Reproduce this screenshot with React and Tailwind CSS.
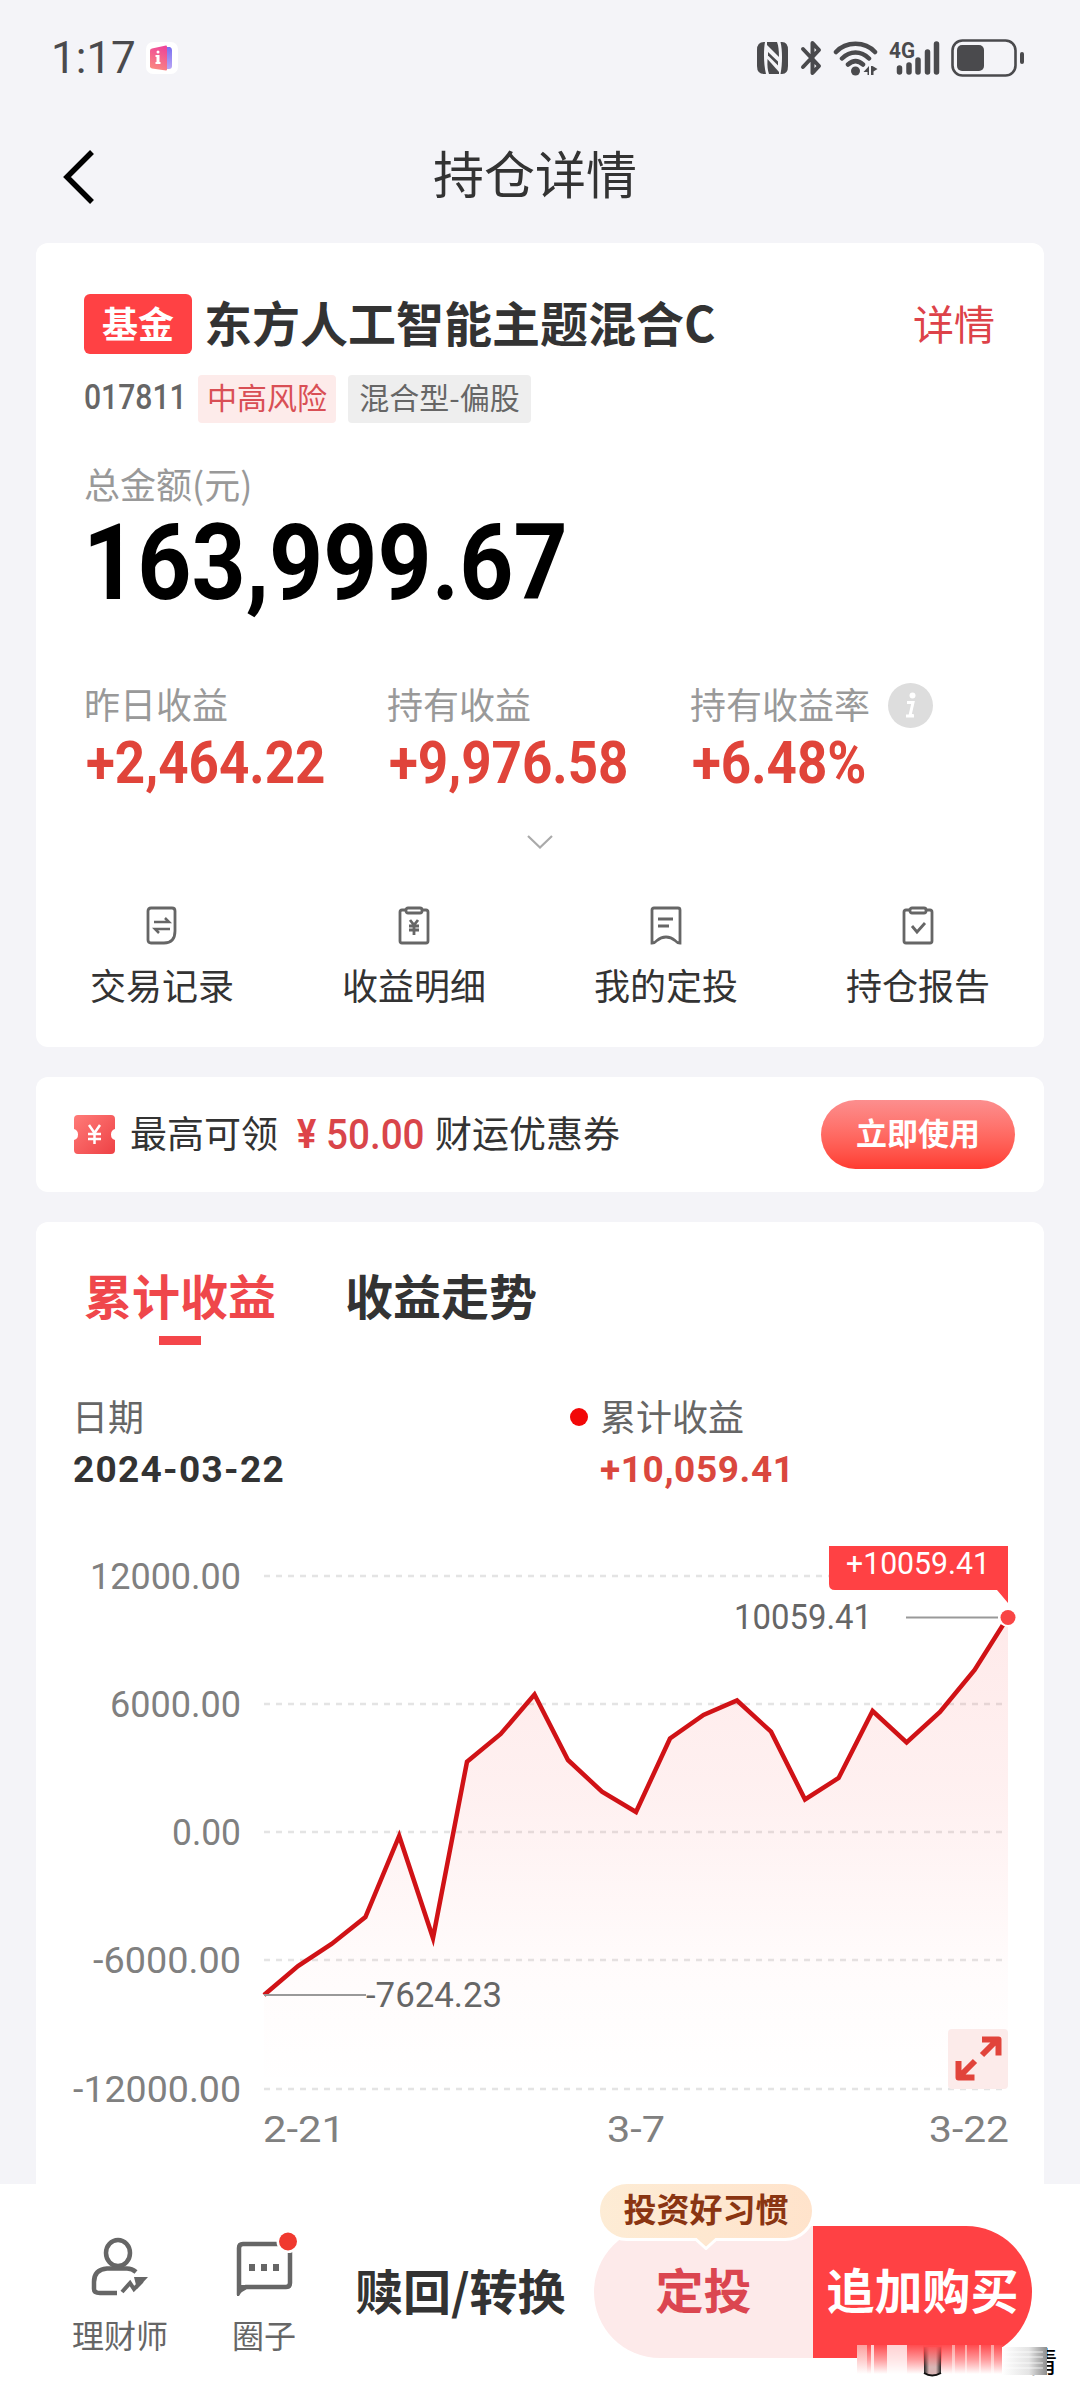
import React from 'react';

const stats = [
  { label: '昨日收益', value: '+2,464.22' },
  { label: '持有收益', value: '+9,976.58' },
  { label: '持有收益率', value: '+6.48%', info: true },
];

const points = [
  [264, 1995], [298, 1966], [331.6, 1944], [365.4, 1917], [399.2, 1836], [433, 1938],
  [467, 1761.7], [500.7, 1734], [534.5, 1694.5], [568, 1760], [602, 1791.7], [636, 1812],
  [670, 1738.5], [703.5, 1715], [737, 1700.5], [771, 1731.7], [805, 1799.5], [838.6, 1778],
  [872.6, 1711], [906.6, 1742.5], [940, 1712], [974.6, 1670], [1008, 1617],
];

const gridLines = [
  { y: 1576, label: '12000.00', x: 91, w: 149 },
  { y: 1704, label: '6000.00', x: 111, w: 129 },
  { y: 1832, label: '0.00', x: 173, w: 67 },
  { y: 1960, label: '-6000.00', x: 94, w: 146 },
  { y: 2089, label: '-12000.00', x: 74, w: 166 },
];

function StatusBar() {
  return (
    <div className="h-[116px] flex items-center pl-[51px] pr-[55px] text-[#4a4a4d]">
      <span className="font-[Roboto] text-[44px] leading-[44px]">1:17</span>
      <svg className="ml-[10px]" width="32" height="32" viewBox="0 0 32 32">
        <defs>
          <linearGradient id="badge" x1="0.6" y1="0" x2="0.3" y2="1">
            <stop offset="0" stopColor="#ee4699" />
            <stop offset="1" stopColor="#fb8a80" />
          </linearGradient>
          <linearGradient id="badgeBack" x1="0" y1="0" x2="0" y2="1">
            <stop offset="0" stopColor="#7a70f0" />
            <stop offset="1" stopColor="#b9a5f5" />
          </linearGradient>
        </defs>
        <rect width="32" height="32" rx="7" fill="#fff" />
        <path d="M18 5h6q2 1 2 3v16q0 3-3 3h-5z" fill="url(#badgeBack)" />
        <path d="M6 6.500l14-3q1 0 1 1v23q0 1-1 1l-14-2q-2-.5-2-2v-16q0-1.500 2-2z" fill="url(#badge)" />
        <path d="M10.500 13h3v7h1v2h-5v-2h1v-5h-1v-2z" fill="#fff" />
        <circle cx="12" cy="10" r="1.500" fill="#fff" />
      </svg>

      <div className="ml-auto flex items-center">
        <svg width="32" height="34" viewBox="0 0 32 34" fill="currentColor">
          <path d="M7 1h1c-1.500 8-1.500 22 1 32H7q-7 0-7-8V9q0-8 7-8z" />
          <path d="M10 1h10q2 5 2 15L10 4z" />
          <path d="M23.500 1h1.500q6 0 6 8v16q0 8-6 8h-1.500c2-10 2-24 0-32z" />
          <path d="M12 33q-2-5-1.500-15l11.500 13v2z" />
          <path d="M11 11l10 9.500v4L11 14.500z" />
        </svg>
        <svg className="ml-[11px]" width="23" height="36" viewBox="0 0 23 36" fill="none" stroke="currentColor" strokeWidth="4" strokeLinejoin="round" strokeLinecap="round">
          <path d="M3 9l16 17-6.500 7V3L19 10 3 27" />
        </svg>
        <svg className="ml-[10px]" width="46" height="36" viewBox="0 0 46 36" fill="none" stroke="currentColor" strokeWidth="4.500" strokeLinecap="round">
          <path d="M3 12C13 1 32 1 42 12M9 18.500c8-8 19-8 27 0M15 24.500c5-4.500 10-4.500 15 0" />
          <circle cx="22.500" cy="31" r="4.500" fill="currentColor" stroke="none" />
          <path d="M36 26v9h-1.500v-3h-4zM38 35v-9h1.500l5 3-4 2.500v3.500z" fill="currentColor" stroke="none" />
        </svg>
        <svg className="ml-[10px] overflow-visible" width="52" height="38" viewBox="0 0 52 38">
          <text x="0" y="19" fontFamily="Roboto" fontSize="22" fontWeight="700" textLength="26" lengthAdjust="spacingAndGlyphs" fill="currentColor">4G</text>
          <path d="M10.500 29v4M20 26v7M29 21v12M38.500 13v20M47.500 5v28" stroke="currentColor" strokeWidth="5.500" strokeLinecap="round" />
        </svg>
        <svg className="ml-[10px]" width="74" height="38" viewBox="0 0 74 38">
          <rect x="1.500" y="1.500" width="63" height="35" rx="10" fill="none" stroke="currentColor" strokeWidth="2.600" />
          <rect x="6" y="6" width="27" height="26" rx="5" fill="currentColor" />
          <rect x="69" y="13" width="4" height="12" rx="2" fill="currentColor" />
        </svg>
      </div>
    </div>
  );
}

function Header() {
  return (
    <div className="h-[127px] pb-[5px] flex items-center">
      <svg className="ml-[62px]" width="34" height="56" viewBox="0 0 34 56" fill="none" stroke="#000" strokeWidth="5.500">
        <path d="M30 3L5 28l25 25" />
      </svg>
      <h1 className="grow text-center text-[51px] leading-[60px] text-[#333] pr-[106px] pb-[10px]">持仓详情</h1>
    </div>
  );
}

const quickLinks = [
  {
    label: '交易记录',
    icon: (
      <>
        <path d="M6 3h21q3 0 3 3v20q0 12-11 12H6q-3 0-3-3V6q0-3 3-3z" />
        <path d="M9 17h15l-4-4M25 24H10l4 4" strokeWidth="2.500" />
      </>
    ),
  },
  {
    label: '收益明细',
    icon: (
      <>
        <path d="M8 5H5q-2 0-2 2v29q0 2 2 2h24q2 0 2-2V7q0-2-2-2h-3" />
        <rect x="9" y="3" width="16" height="5" rx="2" />
        <path d="M13 15l4 5 4-5M12 21h10M12 25h10M17 20v10" />
      </>
    ),
  },
  {
    label: '我的定投',
    icon: (
      <>
        <path d="M5 3h24q2 0 2 2v33q-3 0-5-2.500-4-3.500-9-3.500t-9 3.500Q6 38 3 38V5q0-2 2-2z" />
        <path d="M9 14h15M9 21h11" />
      </>
    ),
  },
  {
    label: '持仓报告',
    icon: (
      <>
        <path d="M8 5H5q-2 0-2 2v29q0 2 2 2h24q2 0 2-2V7q0-2-2-2h-3" />
        <rect x="9" y="3" width="16" height="5" rx="2" />
        <path d="M11 21l5 6 8-9" />
      </>
    ),
  },
];

function HoldingCard() {
  return (
    <div className="mx-9 h-[804px] shrink-0 rounded-xl bg-white pt-[51px]">
      <div className="flex items-center h-[60px] pl-12 pr-[49px]">
        <span className="w-[108px] h-[60px] rounded-md bg-[#ff4144] text-white text-[36px] leading-[56px] font-bold text-center">基金</span>
        <h2 className="ml-3 pb-[5px] text-[48px] leading-[55px] font-bold text-[#333]">东方人工智能主题混合C</h2>
        <a className="ml-auto pb-[5px] text-[41px] leading-[50px] text-[#dd4249]">详情</a>
      </div>

      <div className="flex items-center h-12 mt-[21px] pl-12">
        <div className="w-[114px]">
          <div className="font-[Roboto] text-[35px] leading-[46px] pb-[2px] font-medium text-[#666] origin-left scale-x-[0.86]">017811</div>
        </div>
        <span className="w-[138px] h-12 rounded-sm bg-[#fdebea] text-[#d94f55] text-[30px] leading-[42px] text-center">中高风险</span>
        <span className="ml-3 w-[183px] h-12 rounded-sm bg-[#eee] text-[#666] text-[30px] leading-[42px] text-center">混合型-偏股</span>
      </div>

      <div className="mt-[40px] pl-12 text-[36px] leading-[40px] text-[#999]">总金额(元)</div>
      <div className="mt-[5px] pl-[47px] font-[Roboto] font-bold text-[106px] leading-[110px] text-black">
        <div className="origin-left scale-x-[0.892]">163,999.67</div>
      </div>

      <div className="mt-[65px] pl-12 flex">
        {stats.map((s) => (
          <div key={s.label} className="w-[303px]">
            <div className="flex items-center text-[36px] leading-[40px] h-10 text-[#999] whitespace-nowrap">
              {s.label}
              {s.info && (
                <svg className="ml-[18px] mt-1 shrink-0" width="45" height="45" viewBox="0 0 45 45">
                  <circle cx="22.500" cy="22.500" r="22.500" fill="#ddd" />
                  <circle cx="24.500" cy="12.500" r="3" fill="#fff" />
                  <path d="M19 19.500h6l-3 13h3.500M18 33h8" stroke="#fff" strokeWidth="3" fill="none" />
                </svg>
              )}
            </div>
            <div className="mt-[10px] ml-[2px] font-[Roboto] font-bold text-[59px] leading-[60px] text-[#e0443a] origin-left scale-x-[0.897]">{s.value}</div>
          </div>
        ))}
      </div>

      <svg className="mt-[42px] mx-auto" width="26" height="14" viewBox="0 0 26 14" fill="none" stroke="#aaa" strokeWidth="2.200">
        <path d="M1 1l12 11.500L25 1" />
      </svg>

      <div className="mt-[56px] grid grid-cols-4">
        {quickLinks.map((q) => (
          <div key={q.label} className="flex flex-col items-center">
            <svg width="34" height="41" viewBox="0 0 34 41" fill="none" stroke="#666" strokeWidth="2.800">
              {q.icon}
            </svg>
            <span className="mt-[18px] text-[36px] leading-[40px] text-[#333]">{q.label}</span>
          </div>
        ))}
      </div>
    </div>
  );
}

function CouponBar() {
  return (
    <div className="mx-9 mt-[30px] h-[115px] shrink-0 rounded-xl bg-white flex items-center pl-[38px] pr-[29px] text-[37px] leading-[44px] text-[#333]">
      <svg width="41" height="39" viewBox="0 0 41 39">
        <defs>
          <linearGradient id="coupon" x1="0" y1="0" x2="1" y2="1">
            <stop offset="0" stopColor="#ff7b78" />
            <stop offset="1" stopColor="#ee4145" />
          </linearGradient>
        </defs>
        <path d="M4 0h33q4 0 4 4v10q-4 1-4 5.500t4 5.500v10q0 4-4 4H4q-4 0-4-4V25q4-1 4-5.500T0 14V4q0-4 4-4z" fill="url(#coupon)" />
        <path d="M15 10l5.500 8 5.500-8M14 19h13M14 24h13M20.500 18v11" stroke="#fff" strokeWidth="2.500" fill="none" />
      </svg>
      <span className="ml-[15px] pb-[6px]">最高可领</span>
      <span className="w-[20px] ml-[19px] font-[Roboto] font-bold text-[40px] text-[#dd4449] scale-x-[0.9] origin-left">¥</span>
      <span className="w-[109px] ml-[9px] font-[Roboto] font-medium text-[42px] text-[#d9454a] scale-x-[0.92] origin-left">50.00</span>
      <span className="pb-[6px]">财运优惠券</span>
      <button className="ml-auto w-[194px] h-[69px] rounded-full bg-linear-to-b from-[#fc8e8e] to-[#ff3a30] text-white text-[31px] font-bold leading-[64px] pb-[5px]">
        立即使用
      </button>
    </div>
  );
}

function Chart() {
  const line = points.map((p) => p.join(',')).join(' ');
  return (
    <svg className="mt-[30px]" width="1008" height="640" viewBox="36 1520 1008 640" fontFamily="Roboto">
      <defs>
        <linearGradient id="area" gradientUnits="userSpaceOnUse" x1="0" y1="1617" x2="0" y2="2089">
          <stop offset="0" stopColor="#fa5050" stopOpacity="0.12" />
          <stop offset="0.400" stopColor="#fa5050" stopOpacity="0.080" />
          <stop offset="0.750" stopColor="#fa5050" stopOpacity="0.020" />
          <stop offset="1" stopColor="#fa5050" stopOpacity="0" />
        </linearGradient>
      </defs>

      {gridLines.map((g) => (
        <g key={g.y}>
          <line x1="264" y1={g.y} x2="1008" y2={g.y} stroke="#e4e4e4" strokeWidth="2.500" strokeDasharray="6 6" />
          <text x={g.x - 1} y={g.y + 12.5} fontSize="36" fill="#808080" textLength={g.w + 2} lengthAdjust="spacingAndGlyphs">{g.label}</text>
        </g>
      ))}

      <polygon points={`${line} 1008,2089 264,2089`} fill="url(#area)" />
      <polyline points={line} fill="none" stroke="#d01216" strokeWidth="4.500" />

      <g fontSize="35" fill="#666">
        <line x1="264" y1="1995" x2="366" y2="1995" stroke="#999" strokeWidth="2" />
        <text x="366" y="2006.500" textLength="136" lengthAdjust="spacingAndGlyphs">-7624.23</text>
        <line x1="906" y1="1617.500" x2="998" y2="1617.500" stroke="#999" strokeWidth="2" />
        <text x="734" y="1629" textLength="138" lengthAdjust="spacingAndGlyphs">10059.41</text>
      </g>

      <path d="M829 1546h179v57l-11-13H835q-6 0-6-6z" fill="#ff4144" />
      <text x="846" y="1574" fontSize="31" fill="#fff" textLength="144" lengthAdjust="spacingAndGlyphs">+10059.41</text>
      <circle cx="1008" cy="1617.500" r="9.500" fill="#fff" />
      <circle cx="1008" cy="1617.500" r="7.500" fill="#f94545" />

      <rect x="948" y="2029" width="60" height="60" rx="4" fill="#fcebea" />
      <g fill="none" stroke="#e1443b" strokeWidth="6">
        <path d="M982 2055l16-16M982 2039.500h16.500v16" strokeLinejoin="round" />
        <path d="M975 2061l-16 16M958.500 2061v16.500h16" strokeLinejoin="round" />
      </g>

      <g fontSize="36" fill="#808080">
        <text x="263" y="2142" textLength="82" lengthAdjust="spacingAndGlyphs">2-21</text>
        <text x="607" y="2142" textLength="58" lengthAdjust="spacingAndGlyphs">3-7</text>
        <text x="929" y="2142" textLength="80" lengthAdjust="spacingAndGlyphs">3-22</text>
      </g>
    </svg>
  );
}

function ProfitCard() {
  return (
    <div className="mx-9 mt-[30px] h-[962px] shrink-0 rounded-t-xl bg-white pt-[44px]">
      <div className="flex gap-[69px] pl-12 text-[48px] leading-[56px] font-bold">
        <span className="text-[#ef474b]">累计收益</span>
        <span className="text-[#333]">收益走势</span>
      </div>
      <div className="mt-[14px] ml-[123px] w-[42px] h-[9px] bg-[#f4464a]" />

      <div className="mt-[50px] flex pl-9 text-[36px] leading-[40px]">
        <div className="w-[498px]">
          <div className="text-[#666]">日期</div>
          <div className="mt-[15px] ml-px font-[Roboto] font-bold text-[37px] tracking-[1.3px] text-[#333]">2024-03-22</div>
        </div>
        <div>
          <div className="flex items-center text-[#666]">
            <i className="w-[18px] h-[18px] rounded-full bg-[#f20808] mr-[12px] mt-1" />
            累计收益
          </div>
          <div className="mt-[15px] ml-[30px] font-[Roboto] font-bold text-[37px] tracking-[0.6px] text-[#da473e]">+10,059.41</div>
        </div>
      </div>

      <Chart />
    </div>
  );
}

function Footer() {
  return (
    <div className="relative h-[216px] shrink-0 bg-white flex">
      <div className="w-[168px] ml-9 pt-[52px] flex flex-col items-center">
        <svg width="62" height="62" viewBox="0 0 62 62" fill="none" stroke="#666" strokeWidth="4.500">
          <ellipse cx="29" cy="17" rx="12" ry="13" />
          <path d="M47 36q-4-3.500-9-3.500H18Q5 33.500 5 46v7q0 4 6 4h17" />
          <path d="M33 56l8-9 4 6 8-8" strokeWidth="4" />
          <path d="M45 41h14L48 53z" fill="#666" stroke="none" />
        </svg>
        <span className="mt-[18px] text-[32px] leading-[36px] text-[#666]">理财师</span>
      </div>
      <div className="w-[120px] pt-[52px] flex flex-col items-center">
        <svg className="overflow-visible" width="64" height="62" viewBox="0 0 64 62">
          <path d="M7 55V12q0-4 4-4h43q4 0 4 4v35q0 4-4 4H14z" fill="none" stroke="#666" strokeWidth="4.500" />
          <path d="M5 49h9L7 60H5z" fill="#666" />
          <path d="M17 28h6v7h-6zM29 28h6v7h-6zM41 28h6v7h-6z" fill="#666" />
          <circle cx="56" cy="5.500" r="11.500" fill="#fff" />
          <circle cx="56" cy="5.500" r="9" fill="#f0392f" />
        </svg>
        <span className="mt-[18px] text-[32px] leading-[36px] text-[#666]">圈子</span>
      </div>
      <div className="ml-[31px] mt-[76px] text-[48px] leading-[58px] font-bold text-[#333]">赎回/转换</div>
      <div className="ml-auto mr-12 mt-[42px] flex h-[132px] text-[48px] leading-[124px] font-bold text-center">
        <button className="w-[219px] h-[132px] pb-2 rounded-l-full bg-[#fdeaea] text-[#db4650]">定投</button>
        <button className="w-[219px] h-[132px] pb-2 rounded-r-full bg-[#ff4144] text-white">追加购买</button>
      </div>

      {/* bubble above the auto-invest button */}
      <div className="absolute left-[598px] top-0 w-[216px] h-[66px]">
        <svg className="absolute inset-0" width="216" height="66" viewBox="0 0 216 66">
          <defs>
            <linearGradient id="bubble" x1="0" y1="0" x2="1" y2="0">
              <stop offset="0" stopColor="#fdecd5" />
              <stop offset="1" stopColor="#ffe3cb" />
            </linearGradient>
          </defs>
          <path d="M29 -1.500h158a28.500 28.500 0 0 1 0 57h-69l-10 9-10-9H29a28.500 28.500 0 0 1 0-57z" fill="url(#bubble)" stroke="#fff" strokeWidth="3" />
        </svg>
        <div className="relative text-center text-[33px] leading-[48px] font-bold text-[#8a3512]">投资好习惯</div>
      </div>

      {/* smudged strip in the corner */}
      <div className="absolute left-[857px] top-[161px] w-[200px] h-[34px]">
        <span className="absolute right-0 top-0 text-[29px] leading-[30px] text-black">情</span>
        <svg className="absolute left-0 top-0" width="190" height="34" viewBox="0 0 190 34">
          <defs>
            <linearGradient id="fade" x1="0" y1="0" x2="0" y2="1">
              <stop offset="0" stopColor="#ff4b4e" />
              <stop offset="0.500" stopColor="#ff9a9c" />
              <stop offset="1" stopColor="#fff" />
            </linearGradient>
            <linearGradient id="pale" x1="0" y1="0" x2="0" y2="1">
              <stop offset="0" stopColor="#fbc4c0" />
              <stop offset="1" stopColor="#fff" />
            </linearGradient>
            <linearGradient id="gray" x1="0" y1="0" x2="1" y2="0">
              <stop offset="0" stopColor="#fff" />
              <stop offset="0.600" stopColor="#e4e4e4" />
              <stop offset="1" stopColor="#8d8d8d" />
            </linearGradient>
            <linearGradient id="dark" x1="0" y1="0" x2="1" y2="0">
              <stop offset="0" stopColor="#222" />
              <stop offset="0.300" stopColor="#d9b5b5" />
              <stop offset="0.700" stopColor="#d9b5b5" />
              <stop offset="1" stopColor="#222" />
            </linearGradient>
            <linearGradient id="veil" x1="0" y1="0" x2="0" y2="1">
              <stop offset="0" stopColor="#ff4b4e" />
              <stop offset="1" stopColor="#ff4b4e" stopOpacity="0" />
            </linearGradient>
          </defs>
          <rect width="146" height="29" fill="url(#fade)" />
          <path d="M0 0h10v29H0zM95 0h3v29h-3zM108 0h2v29h-2zM122 0h2v29h-2zM134 0h3v29h-3z" fill="url(#pale)" fillOpacity="0.700" />
          <path d="M14 0h3v29h-3zM30 0h20v29H30z" fill="#fff" fillOpacity="0.750" />
          <path d="M67 2h17v26q-8 6-17 0z" fill="url(#dark)" />
          <path d="M67 28q8 5 17 0" stroke="#111" strokeWidth="2" fill="none" />
          <rect x="66" width="19" height="22" fill="url(#veil)" />
          <rect x="145" y="2" width="45" height="28" fill="url(#gray)" />
          <path d="M146 7h40M146 12h40M146 18h40M146 23h40" stroke="#fff" strokeWidth="1.500" strokeOpacity="0.500" />
        </svg>
      </div>
    </div>
  );
}

export default function App() {
  return (
    <div className="w-[1080px] h-[2400px] overflow-hidden flex flex-col bg-[#f4f4f8] font-['Noto_Sans_CJK_SC',sans-serif]">
      <StatusBar />
      <Header />
      <HoldingCard />
      <CouponBar />
      <ProfitCard />
      <Footer />
    </div>
  );
}
